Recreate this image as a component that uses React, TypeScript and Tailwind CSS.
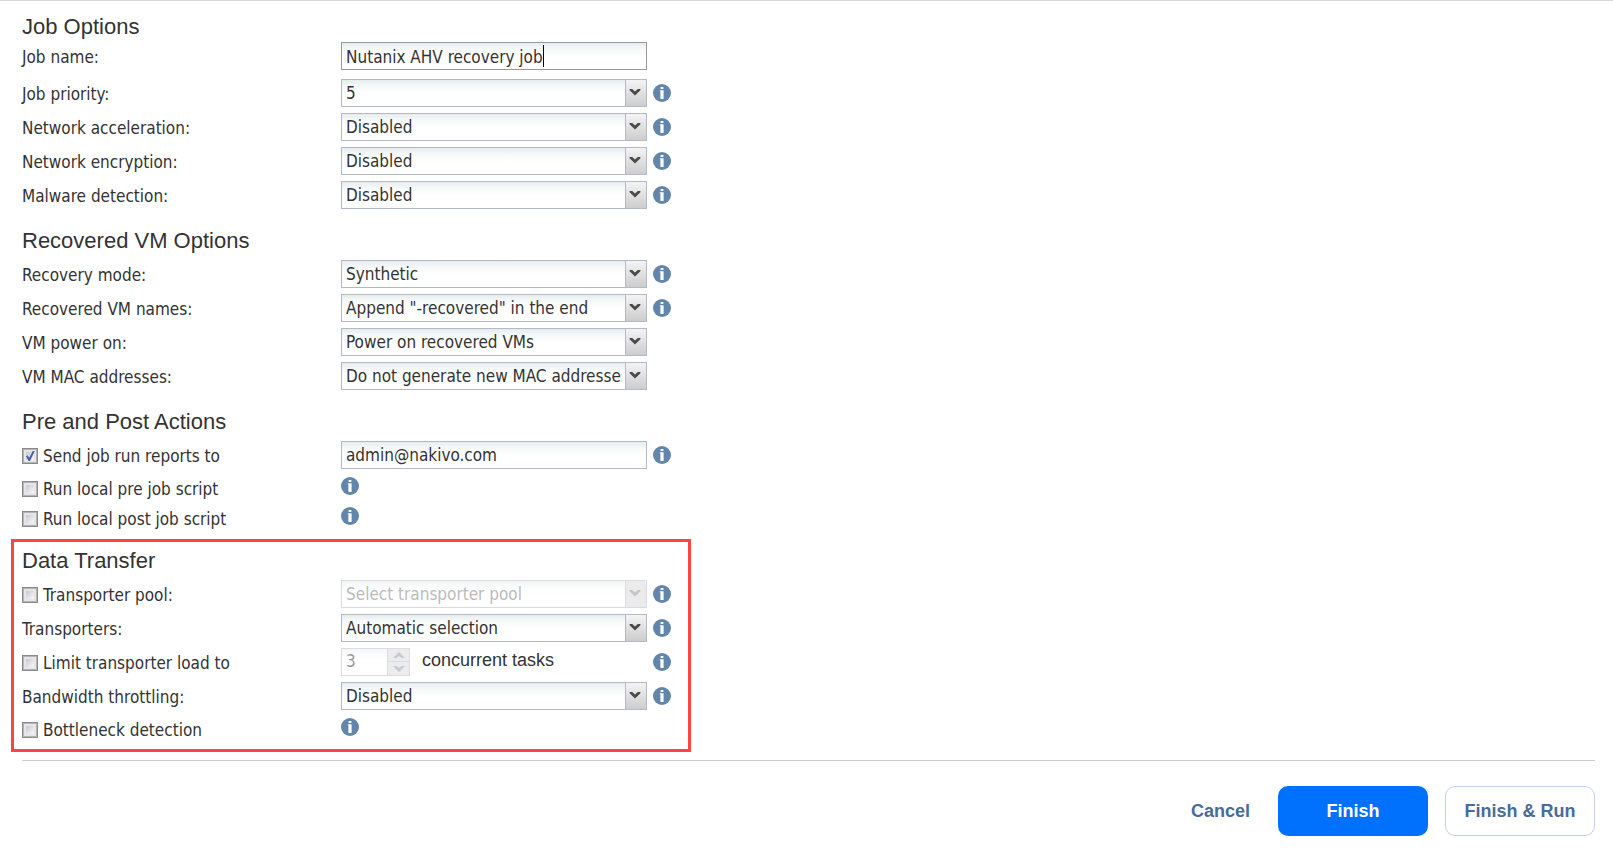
import { useState } from "react";
import type { ReactNode } from "react";

const FIELD =
  "h-7 w-full rounded-none border bg-white bg-[linear-gradient(to_bottom,#e6ecee_0px,#f6f9f9_6px,#ffffff_14px)] pl-1 text-[17px] outline-none";

function InfoIcon() {
  return (
    <button type="button" aria-label="More information" className="block size-[18px] shrink-0">
      <svg viewBox="0 0 18 18" className="block size-[18px]">
        <circle cx="9" cy="9" r="9" fill="#6285ab" />
        <rect x="7.6" y="3" width="2.8" height="2" fill="#ffffff" />
        <path d="M6.8 6.2h3.8V15H7.4V7.2h-.6z" fill="#ffffff" />
      </svg>
    </button>
  );
}

function Heading({ children }: { children: ReactNode }) {
  return <h2 className="h-7 font-['Liberation_Sans',sans-serif] text-[22px] leading-[30px]">{children}</h2>;
}

function Row({ label, info, children }: { label: ReactNode; info?: boolean; children: ReactNode }) {
  return (
    <div className="grid h-[34px] grid-cols-[319px_306px_18px] items-start">
      <div className="pt-px leading-7">{label}</div>
      {children}
      {info && (
        <div className="pt-[5px] pl-1.5">
          <InfoIcon />
        </div>
      )}
    </div>
  );
}

function Check({ id, label, initial = false }: { id: string; label: string; initial?: boolean }) {
  const [on, setOn] = useState(initial);
  return (
    <div className="flex items-center gap-[5px]">
      <span className="relative block size-4">
        <input
          id={id}
          type="checkbox"
          checked={on}
          onChange={(e) => setOn(e.target.checked)}
          className="block size-4 appearance-none border border-[#8a8a8a] bg-[linear-gradient(135deg,#c3c7d2_20%,#f6f6f6_75%)] shadow-[inset_0_0_0_1px_#b4b4b4,inset_0_0_0_3px_#e6e6e6]"
        />
        {on && (
          <svg viewBox="0 0 16 16" className="pointer-events-none absolute inset-0 size-4">
            <path d="M4 8.2l1.6-1 1.6 2.6L10.8 3h2L8 13H6.6z" fill="#4560a6" />
          </svg>
        )}
      </span>
      <label htmlFor={id}>{label}</label>
    </div>
  );
}

function CheckRow({ id, label }: { id: string; label: string }) {
  return (
    <div className="grid h-[30px] grid-cols-[319px_1fr] items-start">
      <div className="leading-7">
        <Check id={id} label={label} />
      </div>
      <div className="pt-0.5">
        <InfoIcon />
      </div>
    </div>
  );
}

function Dropdown({ id, label, value, disabled = false }: { id: string; label?: string; value: string; disabled?: boolean }) {
  return (
    <div className={disabled ? "relative opacity-50" : "relative"}>
      <select
        id={id}
        aria-label={label}
        disabled={disabled}
        className={
          disabled
            ? FIELD + " appearance-none border-[#b5b8c8] pt-px pr-6 text-[#777777] opacity-100"
            : FIELD + " appearance-none border-[#b5b8c8] pt-px pr-6 text-[#333333]"
        }
      >
        <option>{value}</option>
      </select>
      <span
        className={
          disabled
            ? "pointer-events-none absolute top-px right-px bottom-px flex w-[21px] justify-center rounded-tr-sm border-l border-[#b5b8c8] bg-[#d8d8d8] pt-2 pr-0.5"
            : "pointer-events-none absolute top-px right-px bottom-px flex w-[21px] justify-center rounded-tr-sm border-l border-[#b5b8c8] bg-linear-to-b from-[#f4f4f4] to-[#cdcdcd] pt-2 pr-0.5"
        }
      >
        <svg viewBox="0 0 12 8" className="h-2 w-3">
          <path d="M.6 1h2.6L6 3.4 8.8 1h2.6v1.2L6 7.4.6 2.2z" fill={disabled ? "#8c8c8c" : "#4a4a4a"} />
        </svg>
      </span>
    </div>
  );
}

function SelectRow({ id, label, value, info = true }: { id: string; label: string; value: string; info?: boolean }) {
  return (
    <Row label={<label htmlFor={id}>{label}</label>} info={info}>
      <Dropdown id={id} value={value} />
    </Row>
  );
}

export default function App() {
  const [name, setName] = useState("Nutanix AHV recovery job");
  const [email, setEmail] = useState("admin@nakivo.com");

  return (
    <main className="border-t border-[#d9d9d9] bg-white font-['DejaVu_Sans_Condensed','DejaVu_Sans',sans-serif] text-[17px] text-[#333333]">
      <form className="pt-[11px] pr-[18px] pl-[22px]" onSubmit={(e) => e.preventDefault()}>
        <section>
          <Heading>Job Options</Heading>
          <div className="pt-0.5 pb-[3px]">
            <Row label={<label htmlFor="job-name">Job name:</label>}>
              <div className="relative">
                <input
                  id="job-name"
                  value={name}
                  onChange={(e) => setName(e.target.value)}
                  className={FIELD + " border-[#99999d] pt-px"}
                />
                <span className="absolute top-[3px] left-[202px] h-[22px] w-px bg-black" />
              </div>
            </Row>
          </div>
          <SelectRow id="priority" label="Job priority:" value="5" />
          <SelectRow id="acceleration" label="Network acceleration:" value="Disabled" />
          <SelectRow id="encryption" label="Network encryption:" value="Disabled" />
          <SelectRow id="malware" label="Malware detection:" value="Disabled" />
        </section>

        <section className="mt-[11px]">
          <Heading>Recovered VM Options</Heading>
          <div className="pt-1.5">
            <SelectRow id="mode" label="Recovery mode:" value="Synthetic" />
            <SelectRow id="names" label="Recovered VM names:" value={'Append "-recovered" in the end'} />
            <SelectRow id="power" label="VM power on:" value="Power on recovered VMs" info={false} />
            <SelectRow id="mac" label="VM MAC addresses:" value="Do not generate new MAC addresses" info={false} />
          </div>
        </section>

        <section className="mt-[11px]">
          <Heading>Pre and Post Actions</Heading>
          <div className="pt-1.5">
            <Row label={<Check id="reports" label="Send job run reports to" initial />} info>
              <input
                aria-label="Report recipients"
                value={email}
                onChange={(e) => setEmail(e.target.value)}
                className={FIELD + " border-[#b5b8c8]"}
              />
            </Row>
            <CheckRow id="pre-script" label="Run local pre job script" />
            <CheckRow id="post-script" label="Run local post job script" />
          </div>
        </section>

        <section className="mt-1 -ml-[11px] w-[680px] border-3 border-[#fc4444] pt-1 pb-[3px] pl-2">
          <Heading>Data Transfer</Heading>
          <div className="pt-1.5">
            <Row label={<Check id="pool" label="Transporter pool:" />} info>
              <Dropdown id="pool-select" label="Transporter pool" value="Select transporter pool" disabled />
            </Row>
            <SelectRow id="transporters" label="Transporters:" value="Automatic selection" />
            <Row label={<Check id="limit" label="Limit transporter load to" />} info>
              <div className="flex">
                <div className="flex h-7 w-[69px] border border-[#dadbe3]">
                  <input
                    aria-label="Concurrent tasks"
                    value="3"
                    disabled
                    readOnly
                    className="min-w-0 flex-1 bg-[linear-gradient(to_bottom,#f4f6f7_0px,#ffffff_10px)] pl-1 text-[#999999]"
                  />
                  <div className="flex w-[22px] flex-col border-l border-[#dadbe3] bg-[#ececec] pb-px">
                    <button type="button" disabled aria-label="Increase" className="flex flex-1 items-center justify-center border-b border-[#dadbe3]">
                      <svg viewBox="0 0 12 7" className="h-[7px] w-3">
                        <path d="M6 0l6 6H8.6L6 4 3.4 6H0z" fill="#c5cad8" />
                      </svg>
                    </button>
                    <button type="button" disabled aria-label="Decrease" className="flex flex-1 items-center justify-center">
                      <svg viewBox="0 0 12 7" className="h-[7px] w-3">
                        <path d="M6 7l6-6H8.6L6 3 3.4 1H0z" fill="#c5cad8" />
                      </svg>
                    </button>
                  </div>
                </div>
                <span className="pl-3 font-['Liberation_Sans',sans-serif] text-[18px] leading-6">concurrent tasks</span>
              </div>
            </Row>
            <SelectRow id="throttling" label="Bandwidth throttling:" value="Disabled" />
            <CheckRow id="bottleneck" label="Bottleneck detection" />
          </div>
        </section>

        <footer className="mt-2 flex items-center justify-end border-t border-[#cccccc] pt-[25px] font-['Liberation_Sans',sans-serif] text-[18px] font-bold text-[#476b9b]">
          <button type="button" className="mr-7">
            Cancel
          </button>
          <button type="submit" className="mr-[17px] h-[50px] w-[150px] rounded-[10px] bg-[#0071fc] text-white">
            Finish
          </button>
          <button type="button" className="h-[50px] w-[150px] rounded-[10px] border border-[#c5d3e8]">
            Finish &amp; Run
          </button>
        </footer>
      </form>
    </main>
  );
}
